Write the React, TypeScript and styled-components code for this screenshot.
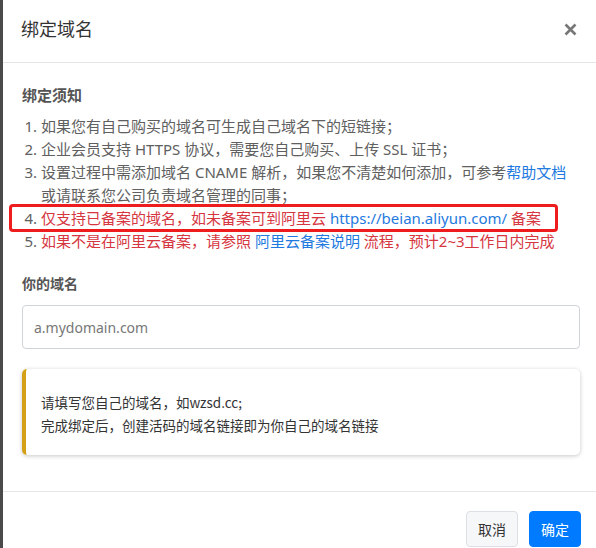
import React from 'react';
import styled, { createGlobalStyle } from 'styled-components';

const GlobalStyle = createGlobalStyle`
  html, body {
    margin: 0;
    padding: 0;
    height: 100%;
    background: #4a4a4a;
  }
  body {
    font-family: "Segoe UI", "Noto Sans", "Noto Sans CJK SC", sans-serif;
    overflow: hidden;
  }
  * { box-sizing: border-box; }
`;

const Modal = styled.div`
  margin-left: 3px;
  width: 593px;
  height: 548px;
  background: #fff;
  display: flex;
  flex-direction: column;
`;

const Header = styled.div`
  height: 63px;
  display: flex;
  align-items: center;
  justify-content: space-between;
  padding: 0 18px 6px 18px;
  border-bottom: 1px solid #e6e6e6;
`;

const Title = styled.h3`
  margin: 0;
  font-family: "Noto Sans CJK SC", sans-serif;
  font-size: 18px;
  font-weight: 400;
  color: #333;
`;

const CloseBtn = styled.button`
  border: none;
  background: none;
  padding: 0;
  margin-top: 3px;
  width: 16px;
  height: 16px;
  display: flex;
  align-items: center;
  justify-content: center;
  cursor: pointer;
`;

const Body = styled.div`
  flex: 1;
  padding: 20px 16px 0 19px;
  border-bottom: 1px solid #e6e6e6;
`;

const SectionTitle = styled.div<{ $size: number }>`
  font-family: "Noto Sans CJK SC", sans-serif;
  font-weight: 700;
  font-size: ${p => p.$size}px;
  color: #555;
  line-height: 24px;
`;

const Notes = styled.ol`
  margin: 8px 0 18px 0;
  padding-left: 19px;
  font-size: 15px;
  line-height: 23px;
  color: #606060;
`;

const Item = styled.li<{ $danger?: boolean }>`
  position: relative;
  color: ${p => (p.$danger ? '#d6363f' : '#606060')};
  &::marker { color: #606060; }
`;

const Mark = styled.span`
  position: absolute;
  left: -32px;
  top: -3px;
  width: 549px;
  height: 28px;
  border: 3px solid #ee1c1c;
  border-radius: 4px;
  pointer-events: none;
`;

const Link = styled.a`
  color: #1f7ae0;
  text-decoration: none;
`;

const Input = styled.input`
  display: block;
  width: 100%;
  height: 44px;
  margin-top: 10px;
  padding: 0 11px;
  border: 1px solid #ced4da;
  border-radius: 4px;
  font-family: inherit;
  font-size: 14px;
  color: #333;
  outline: none;
  &::placeholder { color: #777; }
`;

const Callout = styled.div`
  margin-top: 20px;
  padding: 22px 15px 18px 15px;
  border-left: 4px solid #d4a017;
  border-radius: 5px;
  box-shadow: 0 1px 4px rgba(0, 0, 0, 0.22);
  font-family: "Noto Sans CJK SC", sans-serif;
  font-size: 13.5px;
  line-height: 23px;
  color: #333;
`;

const Footer = styled.div`
  height: 56px;
  display: flex;
  justify-content: flex-end;
  align-items: flex-start;
  gap: 11px;
  padding: 19px 15px 0 0;
`;

const Button = styled.button<{ $primary?: boolean }>`
  height: 36px;
  padding: 0 11px;
  border-radius: 4px;
  font-family: "Noto Sans CJK SC", sans-serif;
  font-size: 14px;
  cursor: pointer;
  border: 1px solid ${p => (p.$primary ? '#007bff' : '#dcdfe3')};
  background: ${p => (p.$primary ? '#007bff' : '#f6f7f9')};
  color: ${p => (p.$primary ? '#fff' : '#333')};
`;

export default function App() {
  return (
    <>
      <GlobalStyle />
      <Modal>
        <Header>
          <Title>绑定域名</Title>
          <CloseBtn aria-label="close">
            <svg width="13" height="13" viewBox="0 0 13 13">
              <path d="M1.5 1.5 L11.5 11.5 M11.5 1.5 L1.5 11.5" stroke="#777" strokeWidth="2.6" />
            </svg>
          </CloseBtn>
        </Header>
        <Body>
          <SectionTitle $size={15}>绑定须知</SectionTitle>
          <Notes>
            <Item>如果您有自己购买的域名可生成自己域名下的短链接；</Item>
            <Item>企业会员支持 HTTPS 协议，需要您自己购买、上传 SSL 证书；</Item>
            <Item>
              设置过程中需添加域名 CNAME 解析，如果您不清楚如何添加，可参考<Link href="#">帮助文档</Link>
              或请联系您公司负责域名管理的同事；
            </Item>
            <Item $danger>
              <Mark />
              仅支持已备案的域名，如未备案可到阿里云 <Link href="#">https://beian.aliyun.com/</Link> 备案
            </Item>
            <Item $danger>
              如果不是在阿里云备案，请参照 <Link href="#">阿里云备案说明</Link> 流程，预计2~3工作日内完成
            </Item>
          </Notes>
          <SectionTitle $size={14}>你的域名</SectionTitle>
          <Input placeholder="a.mydomain.com" />
          <Callout>
            请填写您自己的域名，如wzsd.cc;
            <br />
            完成绑定后，创建活码的域名链接即为你自己的域名链接
          </Callout>
        </Body>
        <Footer>
          <Button>取消</Button>
          <Button $primary>确定</Button>
        </Footer>
      </Modal>
    </>
  );
}
